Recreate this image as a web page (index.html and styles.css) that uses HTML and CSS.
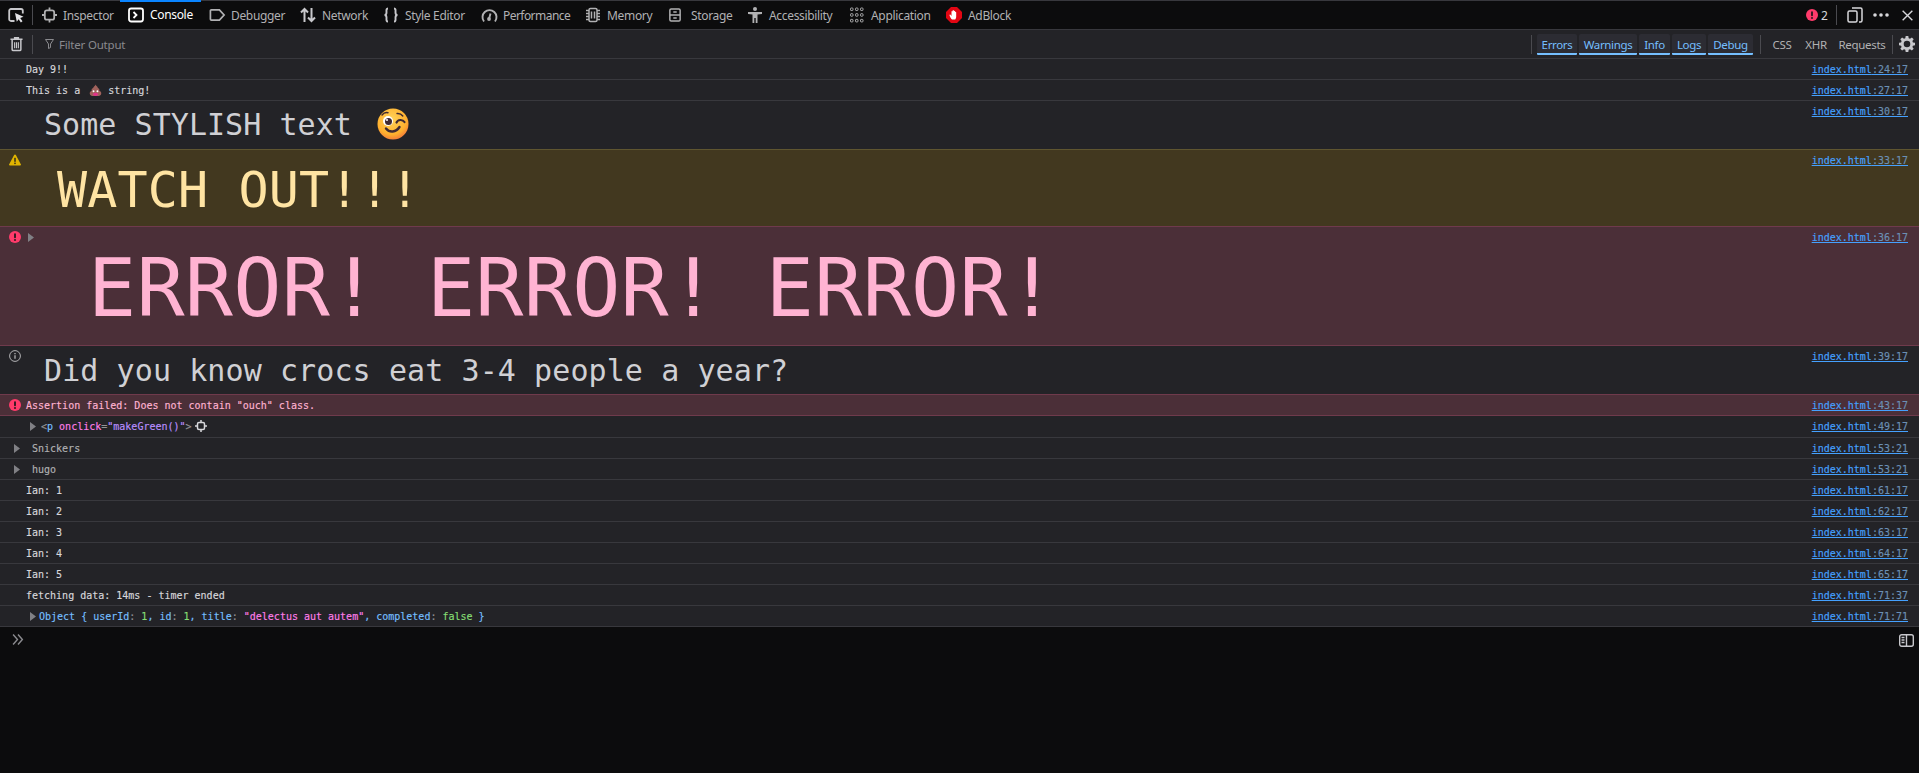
FILE: index.html
```html
<!DOCTYPE html>
<html lang="en">
<head>
<meta charset="utf-8">
<title>Console</title>
<link rel="stylesheet" href="styles.css">
</head>
<body>
<svg class="defs" width="0" height="0" aria-hidden="true">
  <symbol id="err" viewBox="0 0 12 12"><circle cx="6" cy="6" r="6" fill="#ff3b6b"/><rect x="5" y="2.2" width="2" height="5" rx="1" fill="#3a1a24"/><circle cx="6" cy="9" r="1.1" fill="#3a1a24"/></symbol>
  <symbol id="tw" viewBox="0 0 6 9"><path d="M0 0l6 4.5L0 9z" fill="#808085"/></symbol>
</svg>
<div class="page">
  <header class="tabs">
    <svg class="pick" viewBox="0 0 16 16" fill="none" stroke="#c8c8cc" stroke-width="1.800"><path d="M6.500 14H3a1.800 1.800 0 0 1-1.800-1.800V3.800A1.800 1.800 0 0 1 3 2h10a1.800 1.800 0 0 1 1.800 1.800V6.500"/><path d="M7 6l8.500 3.800-3.300 1.300 2.300 3.200-1.600 1.200-2.300-3.200-1.800 2.400z" fill="#e4e4e8" stroke="none"/></svg>
    <span class="vsep tall"></span>
    <div class="tab t-ins"><svg class="ic" viewBox="0 0 16 16" fill="none" stroke="#b1b1b3" stroke-width="1.900"><rect x="3" y="3" width="10" height="10" rx="2.200"/><path d="M8 0v3M8 13v3M0 8h3M13 8h3"/></svg><span>Inspector</span></div>
    <div class="tab active"><svg class="ic" viewBox="0 0 16 16" fill="none" stroke="#fff" stroke-width="1.800"><rect x="1" y="1.500" width="14" height="13" rx="2.200"/><path d="M5.500 5l3 3-3 3"/></svg><span>Console</span></div>
    <div class="tab t-dbg"><svg class="ic wide" viewBox="0 0 18 16" fill="none" stroke="#b1b1b3" stroke-width="1.800"><path d="M2.500 2.500h8.500l5 5.500-5 5.500H2.500a1 1 0 0 1-1-1v-9a1 1 0 0 1 1-1z"/></svg><span>Debugger</span></div>
    <div class="tab t-net"><svg class="ic" viewBox="0 0 16 16" fill="none" stroke="#c8c8cc" stroke-width="2"><path d="M4.500 15V2M1 5.500L4.500 2 8 5.500M11.500 1v13M8 10.500l3.500 3.500 3.500-3.500"/></svg><span>Network</span></div>
    <div class="tab t-sty"><svg class="ic" viewBox="0 0 16 16" fill="none" stroke="#c8c8cc" stroke-width="1.900"><path d="M5 1.500C3 1.500 3.500 3.500 3.500 5.500S3 8 1.500 8c1.500 0 2 .5 2 2.500s-.5 4 1.500 4M11 1.500c2 0 1.500 2 1.500 4s.5 2.500 2 2.500c-1.500 0-2 .5-2 2.500s.5 4-1.500 4"/></svg><span>Style Editor</span></div>
    <div class="tab t-perf"><svg class="ic wide" viewBox="0 0 17 16" fill="none" stroke="#b1b1b3" stroke-width="1.900"><path d="M3 14.500a7 7 0 1 1 11 0"/><circle cx="8" cy="12" r="1.900" fill="#b1b1b3" stroke="none"/><path d="M8 12l1.500-5.500"/></svg><span>Performance</span></div>
    <div class="tab t-mem"><svg class="ic" viewBox="0 0 16 16" fill="none" stroke="#b1b1b3" stroke-width="1.500"><rect x="4" y="1.500" width="8" height="13" rx="1.500"/><path d="M6.500 4.500v7M9.500 4.500v7M1 3.500h3M1 6.500h3M1 9.500h3M1 12.500h3M12 3.500h3M12 6.500h3M12 9.500h3M12 12.500h3"/></svg><span>Memory</span></div>
    <div class="tab t-sto"><svg class="ic narrow" viewBox="0 0 14 16" fill="none" stroke="#b1b1b3" stroke-width="1.700"><rect x="1" y="1" width="12" height="14" rx="1.500"/><path d="M1 8h12M5 4.500h4M5 11.500h4"/></svg><span>Storage</span></div>
    <div class="tab t-acc"><svg class="ic" viewBox="0 0 16 16" fill="#b1b1b3"><circle cx="8" cy="2" r="2"/><path d="M1 5h14v2l-4.500.5V16H8.700v-5H7.300v5H5.500V7.500L1 7z"/></svg><span>Accessibility</span></div>
    <div class="tab t-app"><svg class="ic" viewBox="0 0 16 16" fill="none" stroke="#b1b1b3" stroke-width="1"><rect x="1.500" y="1" width="2.500" height="2.500" rx=".7"/><rect x="6.500" y="1" width="2.500" height="2.500" rx=".7"/><rect x="11.500" y="1" width="2.500" height="2.500" rx=".7"/><rect x="1.500" y="6.700" width="2.500" height="2.500" rx=".7"/><rect x="6.500" y="6.700" width="2.500" height="2.500" rx=".7"/><rect x="11.500" y="6.700" width="2.500" height="2.500" rx=".7"/><rect x="1.500" y="12.400" width="2.500" height="2.500" rx=".7"/><rect x="6.500" y="12.400" width="2.500" height="2.500" rx=".7"/><rect x="11.500" y="12.400" width="2.500" height="2.500" rx=".7"/></svg><span>Application</span></div>
    <div class="tab t-adb"><svg class="ic" viewBox="0 0 16 16"><path d="M5 0h6l5 5v6l-5 5H5l-5-5V5z" fill="#e30613"/><path d="M6 12.500c-1-1-2.300-3-2.500-4.300-.1-.7.7-.8 1.200-.2l.8 1V4.500c0-.8 1-.8 1.100 0V3.700c0-.8 1.200-.8 1.300 0v.6c0-.8 1.200-.8 1.200 0v1c0-.8 1.100-.7 1.100.1v4.100c0 1.300-.5 2.200-1 3z" fill="#fff"/></svg><span>AdBlock</span></div>
    <div class="tabs-end">
      <svg class="err-ic" viewBox="0 0 12 12"><use href="#err"/></svg>
      <span class="err-count">2</span>
      <span class="vsep tall end-sep"></span>
      <svg class="dock" viewBox="0 0 16 16" fill="none" stroke="#d7d7db" stroke-width="1.500"><rect x="1" y="4" width="9" height="11" rx="1.500"/><path d="M5 1h8.500A1.500 1.500 0 0 1 15 2.500v11a1.500 1.500 0 0 1-1.500 1.500H12"/></svg>
      <svg class="dots" viewBox="0 0 16 4" fill="#d7d7db"><circle cx="2" cy="2" r="1.800"/><circle cx="8" cy="2" r="1.800"/><circle cx="14" cy="2" r="1.800"/></svg>
      <svg class="close" viewBox="0 0 12 12" fill="none" stroke="#d7d7db" stroke-width="1.500"><path d="M.7.700l10.600 10.600M11.300.7L.7 11.300"/></svg>
    </div>
  </header>
  <div class="filterbar">
    <svg class="trash" viewBox="0 0 14 16" fill="none" stroke="#c8c8cc" stroke-width="1.600"><path d="M.5 3h13M5 3V1.200h4V3M2.300 3v10.800a1.300 1.300 0 0 0 1.300 1.300h6.800a1.300 1.300 0 0 0 1.300-1.300V3"/><path d="M5 6v6.500M7 6v6.500M9 6v6.500" stroke-width="1.200"/></svg>
    <span class="vsep"></span>
    <svg class="funnel" viewBox="0 0 9 10" fill="none" stroke="#8a8a8e" stroke-width="1"><path d="M.5.500h8L5.500 5v3.500l-2 1V5z"/></svg>
    <span class="filter-text">Filter Output</span>
    <div class="filters">
      <span class="vsep"></span>
      <span class="chip c1">Errors</span>
      <span class="chip c2">Warnings</span>
      <span class="chip c3">Info</span>
      <span class="chip c4">Logs</span>
      <span class="chip c5">Debug</span>
      <span class="vsep sep-b"></span>
      <span class="plain p1">CSS</span>
      <span class="plain p2">XHR</span>
      <span class="plain p3">Requests</span>
      <span class="vsep sep-c"></span>
      <svg class="gear" viewBox="0 0 16 16" fill="#c8c8cc"><path fill-rule="evenodd" d="M6.700 0h2.600l.4 2.200 1.300.5L12.900 1.400l1.800 1.800-1.300 1.900.5 1.300 2.100.3v2.600l-2.100.4-.5 1.300 1.300 1.800-1.800 1.800-1.900-1.300-1.300.5L9.300 16H6.700l-.4-2.200-1.300-.5-1.900 1.300-1.800-1.800 1.300-1.800-.5-1.300L0 9.300V6.700l2.100-.3.500-1.300-1.300-1.900 1.800-1.800L5 2.700l1.300-.5zM8 4.700a3.300 3.300 0 1 0 0 6.600 3.300 3.300 0 0 0 0-6.600z"/></svg>
    </div>
  </div>
  <main class="log">
    <div class="row"><div class="msg">Day 9!!</div><a class="src">index.html<i>:24:17</i></a></div>
    <div class="row"><div class="msg">This is a <svg class="poop" viewBox="0 0 12 12"><path d="M6 .5c.5 1.500 2.200 1.800 2.200 3.300 1.300.3 1.600 1.600 1.300 2.500 1.400.4 2 1.500 1.800 2.700-.2 1.300-1.300 2-2.300 2H3c-1 0-2.100-.7-2.300-2C.5 7.800 1.100 6.700 2.500 6.300c-.3-.9 0-2.200 1.300-2.500C3.800 2.500 6 2 6 .5z" fill="#a0625c"/><ellipse cx="6" cy="9.500" rx="2.400" ry="1.500" fill="#e0338a"/><circle cx="4.200" cy="6.600" r=".9" fill="#fff"/><circle cx="7.800" cy="6.600" r=".9" fill="#fff"/></svg> string!</div><a class="src">index.html<i>:27:17</i></a></div>
    <div class="row big stylish"><div class="msg">Some STYLISH text <svg class="wink" viewBox="0 0 32 32"><defs><radialGradient id="face" cx=".45" cy=".35" r=".75"><stop offset="0" stop-color="#ffd35a"/><stop offset=".65" stop-color="#ffb02e"/><stop offset=".9" stop-color="#f4793a"/><stop offset="1" stop-color="#d95f8a"/></radialGradient></defs><circle cx="16" cy="16" r="15.500" fill="url(#face)"/><circle cx="11" cy="13" r="5" fill="#fff"/><circle cx="11.500" cy="13.500" r="3.500" fill="#402a32"/><circle cx="10" cy="12" r="1" fill="#fff"/><path d="M19.500 14.500c1.200-3 6-3.500 8-.5" fill="none" stroke="#402a32" stroke-width="2.200" stroke-linecap="round"/><path d="M5 7c1.500-2 4-2.800 6-2.300M20 5.500c2.500-.3 4.500 .8 5.800 2.500" fill="none" stroke="#402a32" stroke-width="1.400" stroke-linecap="round"/><path d="M9 20.500c3.500 4.500 10 4 13.500-1.500" fill="none" stroke="#402a32" stroke-width="2.400" stroke-linecap="round"/></svg></div><a class="src">index.html<i>:30:17</i></a></div>
    <div class="row warn"><svg class="ri" viewBox="0 0 12 12"><path d="M6 .5a1 1 0 0 1 .9.500l4.900 9.200a.8.8 0 0 1-.7 1.300H.9a.8.8 0 0 1-.7-1.300L5.100 1A1 1 0 0 1 6 .5z" fill="#e0b400"/><rect x="5.200" y="3.800" width="1.600" height="4" fill="#3f3517"/><rect x="5.200" y="8.600" width="1.600" height="1.500" fill="#3f3517"/></svg><div class="msg">WATCH OUT!!!</div><a class="src">index.html<i>:33:17</i></a></div>
    <div class="row error huge"><svg class="ri"><use href="#err"/></svg><svg class="tw"><use href="#tw"/></svg><div class="msg">ERROR! ERROR! ERROR!</div><a class="src">index.html<i>:36:17</i></a></div>
    <div class="row big info"><svg class="ri" viewBox="0 0 12 12" fill="none" stroke="#b1b1b3"><circle cx="6" cy="6" r="5.400"/><path d="M6 5.200v3.600M6 3v1.200" stroke-width="1.300"/></svg><div class="msg">Did you know crocs eat 3-4 people a year?</div><a class="src">index.html<i>:39:17</i></a></div>
    <div class="row error small"><svg class="ri"><use href="#err"/></svg><div class="msg">Assertion failed: Does not contain "ouch" class.</div><a class="src">index.html<i>:43:17</i></a></div>
    <div class="row node"><svg class="tw"><use href="#tw"/></svg><div class="msg">&lt;<b class="tag">p</b> <b class="attr">onclick</b>=<b class="val">"makeGreen()"</b>&gt;<svg class="target" viewBox="0 0 12 12" fill="none" stroke="#d7d7db" stroke-width="1.500"><rect x="2.500" y="2.500" width="7" height="7" rx="1.500"/><path d="M6 0v2.500M6 9.500V12M0 6h2.500M9.500 6H12"/></svg></div><a class="src">index.html<i>:49:17</i></a></div>
    <div class="row group"><svg class="tw"><use href="#tw"/></svg><div class="msg">Snickers</div><a class="src">index.html<i>:53:21</i></a></div>
    <div class="row group"><svg class="tw"><use href="#tw"/></svg><div class="msg">hugo</div><a class="src">index.html<i>:53:21</i></a></div>
    <div class="row"><div class="msg">Ian: 1</div><a class="src">index.html<i>:61:17</i></a></div>
    <div class="row"><div class="msg">Ian: 2</div><a class="src">index.html<i>:62:17</i></a></div>
    <div class="row"><div class="msg">Ian: 3</div><a class="src">index.html<i>:63:17</i></a></div>
    <div class="row"><div class="msg">Ian: 4</div><a class="src">index.html<i>:64:17</i></a></div>
    <div class="row"><div class="msg">Ian: 5</div><a class="src">index.html<i>:65:17</i></a></div>
    <div class="row"><div class="msg">fetching data: 14ms - timer ended</div><a class="src">index.html<i>:71:37</i></a></div>
    <div class="row obj"><svg class="tw"><use href="#tw"/></svg><div class="msg"><b class="key">Object { userId</b>: <b class="num">1</b><b class="key">, id</b>: <b class="num">1</b><b class="key">, title</b>: <b class="str">"delectus aut autem"</b><b class="key">, completed</b>: <b class="num">false</b><b class="key"> }</b></div><a class="src">index.html<i>:71:71</i></a></div>
  </main>
  <footer class="prompt">
    <svg class="chev" viewBox="0 0 11 10" fill="none" stroke="#8a8a8e" stroke-width="1.300"><path d="M1 .5L5 5 1 9.500M5.500 .5l4 4.500-4 4.500"/></svg>
    <svg class="side" viewBox="0 0 15 13" fill="none" stroke="#c8c8cc" stroke-width="1.400"><rect x=".7" y=".7" width="13.600" height="11.600" rx="2"/><path d="M7.500 .6v11.800M2.500 3.500h3M2.500 6h3M2.500 8.500h3"/></svg>
  </footer>
</div>
</body>
</html>
```
FILE: styles.css
```css
* { box-sizing: border-box; }
html, body { margin: 0; height: 100%; background: #0c0c0d; overflow: hidden; }
.defs { display: block; height: 0; }
.page { display: flex; flex-direction: column; height: 773px; font-family: "Noto Sans", "Open Sans", sans-serif; font-size: 12px; color: #b1b1b3; }

.tabs { display: flex; align-items: center; height: 30px; background: #0c0c0d; border-top: 1px solid #38383d; border-bottom: 1px solid #38383d; padding-left: 8px; flex: none; }
.pick { width: 16px; height: 16px; flex: none; margin-right: 8px; }
.vsep { width: 1px; height: 19px; background: #4a4a4f; flex: none; }
.vsep.tall { height: 20px; }
.tab { display: flex; align-items: center; height: 29px; flex: none; white-space: nowrap; font-size: 12px; letter-spacing: -.33px; position: relative; }
.ic { width: 16px; height: 16px; flex: none; margin-right: 6px; }
.ic.wide { width: 17px; margin-right: 5px; }
.ic.narrow { width: 12px; margin-right: 10px; }
.t-ins { margin-left: 9px; width: 78px; }
.t-ins .ic { width: 15px; margin-right: 6px; }
.active { width: 81px; padding-left: 8px; color: #fff; box-shadow: inset 0 2px 0 #0a84ff; background: #0c0c0d; margin-top: -1px; height: 29px; }
.t-dbg { width: 99px; padding-left: 8px; }
.t-net { width: 83px; }
.t-sty { width: 98px; }
.t-perf { width: 104px; letter-spacing: -.55px; }
.t-mem { width: 84px; }
.t-sto { width: 78px; }
.t-acc { width: 102px; }
.t-app { width: 97px; }
.t-adb { width: 70px; }
.active .ic { margin-right: 6px; }
.tabs-end { display: flex; align-items: center; margin-left: auto; padding-right: 6px; }
.err-ic { width: 12px; height: 12px; flex: none; }
.err-count { margin-left: 3px; width: 9px; color: #d7d7db; }
.end-sep { margin-left: 6px; margin-right: 10px; }
.dock { width: 16px; height: 16px; flex: none; margin-right: 10px; }
.dots { width: 16px; height: 4px; flex: none; margin-right: 13px; }
.close { width: 11px; height: 11px; flex: none; }

.filterbar { display: flex; align-items: center; height: 29px; background: #232327; border-bottom: 1px solid #38383d; padding-left: 10px; flex: none; }
.trash { width: 13px; height: 16px; flex: none; margin-right: 9px; }
.funnel { width: 9px; height: 10px; flex: none; margin-left: 12px; margin-right: 5px; }
.filter-text { color: #8a8a8e; font-size: 11.500px; letter-spacing: -.2px; }
.filters { display: flex; align-items: center; margin-left: auto; padding-right: 4px; height: 100%; }
.chip { display: flex; align-items: center; justify-content: center; height: 21px; padding-top: 2px; margin-left: 2px; background: #2c2c33; color: #75bfff; border-bottom: 2px solid #75bfff; border-radius: 2px 2px 1px 1px; font-size: 11.500px; letter-spacing: -.35px; }
.c1 { width: 40px; margin-left: 5px; }
.c2 { width: 58px; }
.c3 { width: 31px; }
.c4 { width: 34px; }
.c5 { width: 45px; }
.sep-b { margin-left: 7px; margin-right: 11px; }
.plain { display: flex; justify-content: center; margin-left: 13px; font-size: 11.500px; letter-spacing: -.3px; color: #b1b1b3; white-space: nowrap; }
.p1 { width: 20px; margin-left: 0; }
.p2 { width: 22px; }
.p3 { width: 44px; }
.sep-c { margin-left: 8px; margin-right: 6px; }
.gear { width: 16px; height: 16px; flex: none; }

.log { background: #232327; font-family: "DejaVu Sans Mono", "Liberation Mono", monospace; font-size: 10px; color: #d7d7db; flex: none; }
.row { display: flex; align-items: flex-start; height: 21px; border-bottom: 1px solid #38383d; padding: 0 11px 0 26px; line-height: 20px; white-space: pre; }
.msg { padding-top: 1px; -webkit-text-stroke: .15px; }
.src { margin-left: auto; margin-top: 1px; color: #45a1ff; text-decoration: underline; flex: none; font-size: 10px; -webkit-text-stroke: .15px; }
.src i { font-style: normal; color: #6b90b5; }
.ri { width: 12px; height: 12px; flex: none; margin-left: -17px; margin-right: 5px; margin-top: 4px; }
.tw { width: 6px; height: 9px; flex: none; }

.big { color: #d0d0d4; }
.big .msg { font-size: 30px; line-height: 35px; letter-spacing: .05px; -webkit-text-stroke: 0; }
.stylish { height: 49px; }
.stylish .msg { padding: 6px 0 0 18px; }
.info { height: 49px; }
.info .msg { padding: 7px 0 0 18px; letter-spacing: .09px; }
.wink { width: 32px; height: 32px; vertical-align: -5px; margin: 0 0 0 7px; }
.poop { width: 13px; height: 13px; vertical-align: -3px; margin-left: 3px; }

.warn { height: 78px; background: #42381f; color: #ffe4a3; border-top: 1px solid #5f5530; border-bottom: 1px solid #6f3a4c; margin-top: -1px; }
.warn .msg { font-size: 50px; line-height: 58px; padding: 11px 0 0 31px; letter-spacing: .15px; -webkit-text-stroke: 0; }

.error { background: #4b2f38; color: #ffb3d2; border-bottom: 1px solid #6f3a4c; }
.huge { height: 119px; }
.huge .tw { margin: 6px 0 0 2px; }
.huge .msg { font-size: 80px; line-height: 93px; padding: 15px 0 0 54px; letter-spacing: .25px; -webkit-text-stroke: 0; }
.small { height: 22px; border-top: 1px solid #6f3a4c; margin-top: -1px; }

.node { height: 22px; }
.node .tw, .obj .tw { margin: 6px 5px 0 4px; }
.obj .tw { margin-right: 3px; }
.group { padding-left: 14px; color: #b1b1b3; }
.group .tw { margin: 6px 12px 0 0; }
.tag { color: #75bfff; font-weight: 400; }
.attr { color: #ff7de9; font-weight: 400; }
.val { color: #b98eff; font-weight: 400; }
.node .msg { color: #939395; }
.target { width: 12px; height: 12px; vertical-align: -2px; margin-left: 3px; }
.key { color: #75bfff; font-weight: 400; }
.num { color: #86de74; font-weight: 400; }
.str { color: #ff7de9; font-weight: 400; }
.obj .msg { color: #939395; }

.prompt { flex: 1; display: flex; align-items: flex-start; justify-content: space-between; background: #0c0c0d; padding: 6px 5px 0 12px; }
.chev { width: 12px; height: 11px; flex: none; margin-top: 1px; }
.side { width: 15px; height: 13px; flex: none; margin-top: 1px; }
```
